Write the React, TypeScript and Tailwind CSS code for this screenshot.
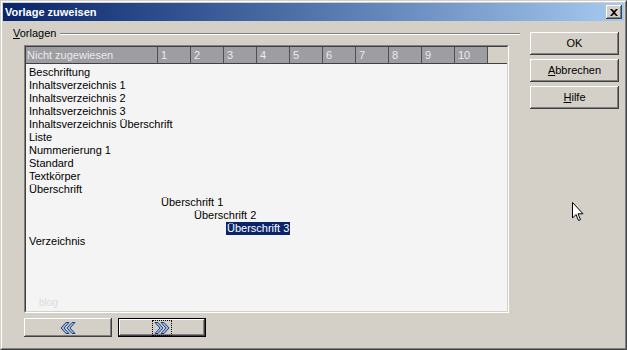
import React from "react";

const items: { text: string; indent: number; selected?: boolean }[] = [
  { text: "Beschriftung", indent: 0 },
  { text: "Inhaltsverzeichnis 1", indent: 0 },
  { text: "Inhaltsverzeichnis 2", indent: 0 },
  { text: "Inhaltsverzeichnis 3", indent: 0 },
  { text: "Inhaltsverzeichnis Überschrift", indent: 0 },
  { text: "Liste", indent: 0 },
  { text: "Nummerierung 1", indent: 0 },
  { text: "Standard", indent: 0 },
  { text: "Textkörper", indent: 0 },
  { text: "Überschrift", indent: 0 },
  { text: "Überschrift 1", indent: 1 },
  { text: "Überschrift 2", indent: 2 },
  { text: "Überschrift 3", indent: 3, selected: true },
  { text: "Verzeichnis", indent: 0 },
];

const btn =
  "bg-[#d4d0c8] shadow-[inset_-1px_-1px_#404040,inset_1px_1px_#ffffff,inset_-2px_-2px_#808080,inset_2px_2px_#d4d0c8] flex items-center justify-center text-[11px] text-black";

function Chevrons({ dir }: { dir: "left" | "right" }) {
  const flip = dir === "right" ? "scale(-1,1) translate(-16,0)" : undefined;
  return (
    <svg width="16" height="12" viewBox="0 0 16 12">
      <g transform={flip}>
        <path d="M6 0.5 L1 6 L6 11.5 L9 11.5 L4 6 L9 0.5 Z" fill="#9bbbe2" stroke="#1f3f7a" strokeWidth="1" />
        <path d="M12 0.5 L7 6 L12 11.5 L15 11.5 L10 6 L15 0.5 Z" fill="#9bbbe2" stroke="#1f3f7a" strokeWidth="1" />
      </g>
    </svg>
  );
}

export default function App() {
  const cols = ["1", "2", "3", "4", "5", "6", "7", "8", "9", "10"];
  return (
    <div
      className="w-[627px] h-[350px] relative overflow-hidden bg-[#d4d0c8] border border-t-[#d4d0c8] border-l-[#d4d0c8] border-r-[#404040] border-b-[#404040]"
      style={{ fontFamily: '"Liberation Sans", Arial, sans-serif' }}
    >
      <div className="w-full h-full border border-t-white border-l-white border-r-[#808080] border-b-[#808080] p-px flex flex-col">
        {/* Title bar */}
        <div className="h-[18px] flex items-center justify-between bg-gradient-to-r from-[#0a246a] to-[#a6caf0] pl-[2px] pr-[2px]">
          <span className="text-white font-bold text-[11px] leading-none">Vorlage zuweisen</span>
          <div className="w-[16px] h-[14px] bg-[#d4d0c8] shadow-[inset_-1px_-1px_#404040,inset_1px_1px_#ffffff,inset_-2px_-2px_#808080] flex items-center justify-center">
            <svg width="8" height="7" viewBox="0 0 8 7">
              <path d="M0 0 L2 0 L4 2 L6 0 L8 0 L5 3.5 L8 7 L6 7 L4 5 L2 7 L0 7 L3 3.5 Z" fill="#000" />
            </svg>
          </div>
        </div>

        {/* Content */}
        <div className="flex flex-row pl-[10px]">
          {/* Left column */}
          <div className="w-[507px] flex flex-col">
            <div className="mt-[6px] h-[13px] flex items-center">
              <span className="text-[11px] leading-[13px] text-black">
                <span className="underline">V</span>orlagen
              </span>
              <div className="flex-1 ml-[4px] mt-[1px] h-[2px] border-t border-t-[#808080] border-b border-b-white" />
            </div>

            {/* List box */}
            <div className="ml-[11px] mt-[5px] w-[485px] h-[268px] border border-t-[#808080] border-l-[#808080] border-r-white border-b-white">
              <div className="w-full h-full border border-t-[#404040] border-l-[#404040] border-r-[#d4d0c8] border-b-[#d4d0c8] flex flex-col bg-[#f4f4f4]">
                <div className="h-[17px] flex bg-[#d4d0c8] border-b border-b-[#404040]">
                  <div className="w-[132px] h-full bg-[#9d9da2] border-r border-r-[#505050] text-[11px] leading-[16px] text-[#ececec] pl-[1px]">
                    Nicht zugewiesen
                  </div>
                  {cols.map((c) => (
                    <div
                      key={c}
                      className="w-[33px] h-full bg-[#9d9da2] border-r border-r-[#505050] text-[11px] leading-[16px] text-[#ececec] pl-[3px]"
                    >
                      {c}
                    </div>
                  ))}
                </div>
                <div className="flex-1 relative pt-[2px]">
                  {items.map((it, i) => (
                    <div key={i} className="h-[13px] flex items-center text-[11px] leading-[13px] text-black">
                      <div
                        className={
                          it.indent === 0
                            ? "w-[2px]"
                            : it.indent === 1
                            ? "w-[134px]"
                            : it.indent === 2
                            ? "w-[167px]"
                            : "w-[200px]"
                        }
                      />
                      <span className={it.selected ? "bg-[#0a246a] text-white px-px" : "px-px"}>{it.text}</span>
                    </div>
                  ))}
                  <span className="absolute left-[13px] bottom-[3px] text-[10px] text-[#dcdcdc] leading-none">blog</span>
                </div>
              </div>
            </div>

            {/* Bottom buttons */}
            <div className="ml-[11px] mt-[5px] flex gap-[6px]">
              <div className={`${btn} w-[88px] h-[19px]`}>
                <Chevrons dir="left" />
              </div>
              <div className="w-[88px] h-[19px] border border-black">
                <div className={`${btn} w-full h-full`}>
                  <div className="border border-dotted border-black px-[1px] py-[1px] flex items-center">
                    <Chevrons dir="right" />
                  </div>
                </div>
              </div>
            </div>
          </div>

          {/* Right column */}
          <div className="ml-[10px] mt-[11px] flex flex-col gap-[4px]">
            <div className={`${btn} w-[89px] h-[23px]`}>OK</div>
            <div className={`${btn} w-[89px] h-[23px]`}>
              <span>
                <span className="underline">A</span>bbrechen
              </span>
            </div>
            <div className={`${btn} w-[89px] h-[23px]`}>
              <span>
                <span className="underline">H</span>ilfe
              </span>
            </div>
          </div>
        </div>
      </div>

      {/* Mouse cursor */}
      <svg className="absolute left-[571px] top-[201px]" width="12" height="20" viewBox="0 0 12 20">
        <path d="M0.5 0.5 L0.5 16 L4 12.5 L6.5 18.5 L8.5 17.6 L6 11.8 L11 11.8 Z" fill="#fff" stroke="#000" strokeWidth="1" />
      </svg>
    </div>
  );
}
